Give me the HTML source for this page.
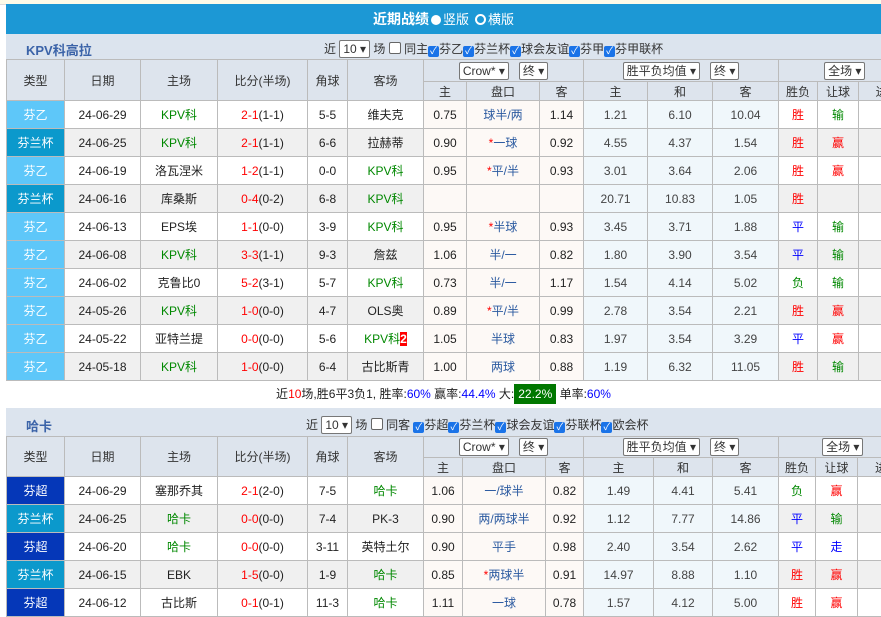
<!DOCTYPE html><html><head><meta charset="utf-8"><style>
body{margin:0;width:881px;height:615px;overflow:hidden;background:#fff;font-family:"Liberation Sans","Noto Sans CJK SC",sans-serif;font-size:12px;color:#222}
.top{position:absolute;left:0;top:0;width:881px;height:4px;background:#fdfbe8;border-bottom:1px solid #ddd}
.bar{position:absolute;left:6px;top:4px;width:875px;height:30px;background:#1c98d5;color:#fff;font-size:14px;font-weight:bold;text-align:center;line-height:30px}
.bar span{font-weight:normal;font-size:13px}
.rad{display:inline-block;width:10px;height:10px;border-radius:50%;background:#fff;vertical-align:-1px;margin:0 2px}
.ttl{position:absolute;left:6px;width:875px;background:#dce4ee;color:#333}
.ttl b{position:absolute;left:20px;color:#3b63a8;font-size:13px}
.ttl .f{position:absolute;white-space:nowrap;font-size:12px}
.sel{display:inline-block;border:1px solid #777;background:#fff;border-radius:2px;padding:0 3px;height:16px;line-height:16px;font-size:12px}
.cb{display:inline-block;width:11px;height:11px;background:#1a73e8;border-radius:2px;color:#fff;font-size:10px;line-height:11px;text-align:center;vertical-align:-1px}
.cbe{display:inline-block;width:10px;height:10px;border:1px solid #666;border-radius:2px;background:#fff;vertical-align:-1px}
table{position:absolute;left:6px;border-collapse:collapse;table-layout:fixed;font-size:12px}
td,th{border:1px solid #bbb;text-align:center;padding:0;font-weight:normal;white-space:nowrap;overflow:hidden}
th{background:#dde4ed;color:#333}
tr.d td{height:27px}
tr.g td{background:#f0f0f0}
td.h{background:#fdf9f6}
td.o{background:#f0f7fb;color:#444}
tr.g td.h{background:#fdf9f6} tr.g td.o{background:#f0f7fb}
.t1{background:#5ec7f9!important;color:#fff}
.t2{background:#0b99cc!important;color:#fff}
.t3{background:#0537b8!important;color:#fff}
.gr{color:#080}.r{color:#f00}.b{color:#00f}.bl{color:#2b5aa0}
.sum{position:absolute;left:6px;top:380px;width:875px;height:28px;line-height:28px;text-align:center;border-bottom:1px solid #bbb}
</style></head><body>
<div class="top"></div>
<div class="bar">近期战绩<span class="rad"></span><span>竖版</span> <span class="rad" style="border:2px solid #fff;background:#1c98d5;width:7px;height:7px"></span><span>横版</span></div>
<div class="ttl" style="top:34px;height:25px"><b style="top:6px">KPV科高拉</b><div class="f" style="left:318px;top:6px">近 <span class="sel">10 ▾</span> 场 <span class="cbe"></span> 同主<span class="cb">✓</span>芬乙<span class="cb">✓</span>芬兰杯<span class="cb">✓</span>球会友谊<span class="cb">✓</span>芬甲<span class="cb">✓</span>芬甲联杯</div></div>
<table style="top:59px;width:898px">
<colgroup><col style="width:58px"><col style="width:76px"><col style="width:77px"><col style="width:90px"><col style="width:40px"><col style="width:76px"><col style="width:43px"><col style="width:73px"><col style="width:44px"><col style="width:64px"><col style="width:65px"><col style="width:66px"><col style="width:39px"><col style="width:41px"><col style="width:46px"></colgroup>
<tr style="height:22px"><th rowspan="2">类型</th><th rowspan="2">日期</th><th rowspan="2">主场</th><th rowspan="2">比分(半场)</th><th rowspan="2">角球</th><th rowspan="2">客场</th><th colspan="3"><span class="sel">Crow* ▾</span> &nbsp; <span class="sel">终 ▾</span></th><th colspan="3"><span class="sel">胜平负均值 ▾</span> &nbsp; <span class="sel">终 ▾</span></th><th colspan="3" style="text-align:left;padding-left:45px"><span class="sel">全场 ▾</span></th></tr>
<tr style="height:19px"><th>主</th><th>盘口</th><th>客</th><th>主</th><th>和</th><th>客</th><th>胜负</th><th>让球</th><th>进</th></tr>
<tr class="d"><td class="t1">芬乙</td><td>24-06-29</td><td class="gr">KPV科</td><td><span class="r">2-1</span>(1-1)</td><td>5-5</td><td>维夫克</td><td class="h">0.75</td><td class="h bl">球半/两</td><td class="h">1.14</td><td class="o">1.21</td><td class="o">6.10</td><td class="o">10.04</td><td class="r">胜</td><td class="gr">输</td><td></td></tr>
<tr class="d g"><td class="t2">芬兰杯</td><td>24-06-25</td><td class="gr">KPV科</td><td><span class="r">2-1</span>(1-1)</td><td>6-6</td><td>拉赫蒂</td><td class="h">0.90</td><td class="h bl"><span class="r">*</span>一球</td><td class="h">0.92</td><td class="o">4.55</td><td class="o">4.37</td><td class="o">1.54</td><td class="r">胜</td><td class="r">赢</td><td></td></tr>
<tr class="d"><td class="t1">芬乙</td><td>24-06-19</td><td>洛瓦涅米</td><td><span class="r">1-2</span>(1-1)</td><td>0-0</td><td class="gr">KPV科</td><td class="h">0.95</td><td class="h bl"><span class="r">*</span>平/半</td><td class="h">0.93</td><td class="o">3.01</td><td class="o">3.64</td><td class="o">2.06</td><td class="r">胜</td><td class="r">赢</td><td></td></tr>
<tr class="d g"><td class="t2">芬兰杯</td><td>24-06-16</td><td>库桑斯</td><td><span class="r">0-4</span>(0-2)</td><td>6-8</td><td class="gr">KPV科</td><td class="h"></td><td class="h"></td><td class="h"></td><td class="o">20.71</td><td class="o">10.83</td><td class="o">1.05</td><td class="r">胜</td><td></td><td></td></tr>
<tr class="d"><td class="t1">芬乙</td><td>24-06-13</td><td>EPS埃</td><td><span class="r">1-1</span>(0-0)</td><td>3-9</td><td class="gr">KPV科</td><td class="h">0.95</td><td class="h bl"><span class="r">*</span>半球</td><td class="h">0.93</td><td class="o">3.45</td><td class="o">3.71</td><td class="o">1.88</td><td class="b">平</td><td class="gr">输</td><td></td></tr>
<tr class="d g"><td class="t1">芬乙</td><td>24-06-08</td><td class="gr">KPV科</td><td><span class="r">3-3</span>(1-1)</td><td>9-3</td><td>詹兹</td><td class="h">1.06</td><td class="h bl">半/一</td><td class="h">0.82</td><td class="o">1.80</td><td class="o">3.90</td><td class="o">3.54</td><td class="b">平</td><td class="gr">输</td><td></td></tr>
<tr class="d"><td class="t1">芬乙</td><td>24-06-02</td><td>克鲁比0</td><td><span class="r">5-2</span>(3-1)</td><td>5-7</td><td class="gr">KPV科</td><td class="h">0.73</td><td class="h bl">半/一</td><td class="h">1.17</td><td class="o">1.54</td><td class="o">4.14</td><td class="o">5.02</td><td class="gr">负</td><td class="gr">输</td><td></td></tr>
<tr class="d g"><td class="t1">芬乙</td><td>24-05-26</td><td class="gr">KPV科</td><td><span class="r">1-0</span>(0-0)</td><td>4-7</td><td>OLS奥</td><td class="h">0.89</td><td class="h bl"><span class="r">*</span>平/半</td><td class="h">0.99</td><td class="o">2.78</td><td class="o">3.54</td><td class="o">2.21</td><td class="r">胜</td><td class="r">赢</td><td></td></tr>
<tr class="d"><td class="t1">芬乙</td><td>24-05-22</td><td>亚特兰提</td><td><span class="r">0-0</span>(0-0)</td><td>5-6</td><td class="gr">KPV科<span style="background:#f00;color:#fff;font-weight:bold">2</span></td><td class="h">1.05</td><td class="h bl">半球</td><td class="h">0.83</td><td class="o">1.97</td><td class="o">3.54</td><td class="o">3.29</td><td class="b">平</td><td class="r">赢</td><td></td></tr>
<tr class="d g"><td class="t1">芬乙</td><td>24-05-18</td><td class="gr">KPV科</td><td><span class="r">1-0</span>(0-0)</td><td>6-4</td><td>古比斯青</td><td class="h">1.00</td><td class="h bl">两球</td><td class="h">0.88</td><td class="o">1.19</td><td class="o">6.32</td><td class="o">11.05</td><td class="r">胜</td><td class="gr">输</td><td></td></tr>
</table>
<div class="sum">近<span class="r">10</span>场,胜<span>6</span>平3负1, 胜率:<span class="b">60%</span> 赢率:<span class="b">44.4%</span> 大:<span style="background:#070;color:#fff;padding:3px 4px">22.2%</span> 单率:<span class="b">60%</span></div>
<div class="ttl" style="top:408px;height:28px"><b style="top:8px">哈卡</b><div class="f" style="left:300px;top:8px">近 <span class="sel">10 ▾</span> 场 <span class="cbe"></span> 同客 <span class="cb">✓</span>芬超<span class="cb">✓</span>芬兰杯<span class="cb">✓</span>球会友谊<span class="cb">✓</span>芬联杯<span class="cb">✓</span>欧会杯</div></div>
<table style="top:436px;width:898px">
<colgroup><col style="width:58px"><col style="width:76px"><col style="width:77px"><col style="width:90px"><col style="width:40px"><col style="width:76px"><col style="width:39px"><col style="width:83px"><col style="width:38px"><col style="width:70px"><col style="width:59px"><col style="width:66px"><col style="width:37px"><col style="width:42px"><col style="width:47px"></colgroup>
<tr style="height:21px"><th rowspan="2">类型</th><th rowspan="2">日期</th><th rowspan="2">主场</th><th rowspan="2">比分(半场)</th><th rowspan="2">角球</th><th rowspan="2">客场</th><th colspan="3"><span class="sel">Crow* ▾</span> &nbsp; <span class="sel">终 ▾</span></th><th colspan="3"><span class="sel">胜平负均值 ▾</span> &nbsp; <span class="sel">终 ▾</span></th><th colspan="3" style="text-align:left;padding-left:43px"><span class="sel">全场 ▾</span></th></tr>
<tr style="height:19px"><th>主</th><th>盘口</th><th>客</th><th>主</th><th>和</th><th>客</th><th>胜负</th><th>让球</th><th>进</th></tr>
<tr class="d"><td class="t3">芬超</td><td>24-06-29</td><td>塞那乔其</td><td><span class="r">2-1</span>(2-0)</td><td>7-5</td><td class="gr">哈卡</td><td class="h">1.06</td><td class="h bl">一/球半</td><td class="h">0.82</td><td class="o">1.49</td><td class="o">4.41</td><td class="o">5.41</td><td class="gr">负</td><td class="r">赢</td><td></td></tr>
<tr class="d g"><td class="t2">芬兰杯</td><td>24-06-25</td><td class="gr">哈卡</td><td><span class="r">0-0</span>(0-0)</td><td>7-4</td><td>PK-3</td><td class="h">0.90</td><td class="h bl">两/两球半</td><td class="h">0.92</td><td class="o">1.12</td><td class="o">7.77</td><td class="o">14.86</td><td class="b">平</td><td class="gr">输</td><td></td></tr>
<tr class="d"><td class="t3">芬超</td><td>24-06-20</td><td class="gr">哈卡</td><td><span class="r">0-0</span>(0-0)</td><td>3-11</td><td>英特土尔</td><td class="h">0.90</td><td class="h bl">平手</td><td class="h">0.98</td><td class="o">2.40</td><td class="o">3.54</td><td class="o">2.62</td><td class="b">平</td><td class="b">走</td><td></td></tr>
<tr class="d g"><td class="t2">芬兰杯</td><td>24-06-15</td><td>EBK</td><td><span class="r">1-5</span>(0-0)</td><td>1-9</td><td class="gr">哈卡</td><td class="h">0.85</td><td class="h bl"><span class="r">*</span>两球半</td><td class="h">0.91</td><td class="o">14.97</td><td class="o">8.88</td><td class="o">1.10</td><td class="r">胜</td><td class="r">赢</td><td></td></tr>
<tr class="d"><td class="t3">芬超</td><td>24-06-12</td><td>古比斯</td><td><span class="r">0-1</span>(0-1)</td><td>11-3</td><td class="gr">哈卡</td><td class="h">1.11</td><td class="h bl">一球</td><td class="h">0.78</td><td class="o">1.57</td><td class="o">4.12</td><td class="o">5.00</td><td class="r">胜</td><td class="r">赢</td><td></td></tr>
</table>
</body></html>
